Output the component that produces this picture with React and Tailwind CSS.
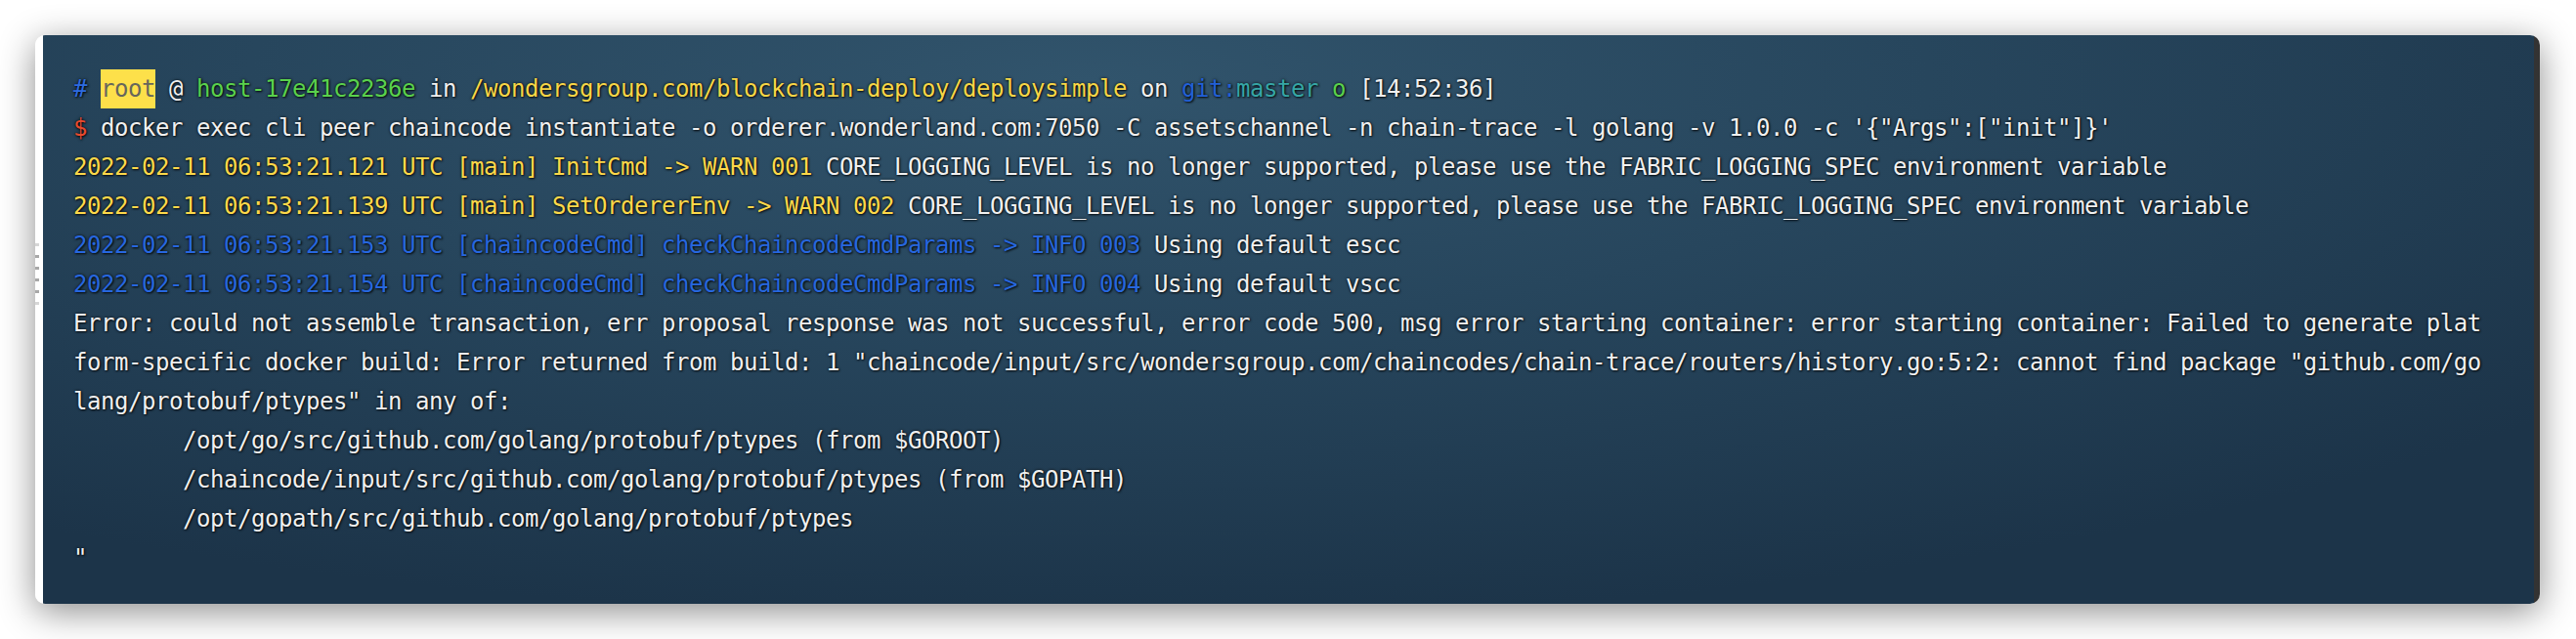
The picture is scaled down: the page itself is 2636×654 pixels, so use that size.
const W = 'text-[#f0f0f0]'
const YEL = 'text-[#fcd84a]'
const BLU = 'text-[#2767de]'

const warnLines = [
  ['2022-02-11 06:53:21.121 UTC [main] InitCmd -> WARN 001', ' CORE_LOGGING_LEVEL is no longer supported, please use the FABRIC_LOGGING_SPEC environment variable'],
  ['2022-02-11 06:53:21.139 UTC [main] SetOrdererEnv -> WARN 002', ' CORE_LOGGING_LEVEL is no longer supported, please use the FABRIC_LOGGING_SPEC environment variable'],
]

const infoLines = [
  ['2022-02-11 06:53:21.153 UTC [chaincodeCmd] checkChaincodeCmdParams -> INFO 003', ' Using default escc'],
  ['2022-02-11 06:53:21.154 UTC [chaincodeCmd] checkChaincodeCmdParams -> INFO 004', ' Using default vscc'],
]

const errorLines = [
  'Error: could not assemble transaction, err proposal response was not successful, error code 500, msg error starting container: error starting container: Failed to generate plat',
  'form-specific docker build: Error returned from build: 1 "chaincode/input/src/wondersgroup.com/chaincodes/chain-trace/routers/history.go:5:2: cannot find package "github.com/go',
  'lang/protobuf/ptypes" in any of:',
  '        /opt/go/src/github.com/golang/protobuf/ptypes (from $GOROOT)',
  '        /chaincode/input/src/github.com/golang/protobuf/ptypes (from $GOPATH)',
  '        /opt/gopath/src/github.com/golang/protobuf/ptypes',
  '"',
]

function Line({ children }) {
  return <div className="h-[40px] leading-[40px] whitespace-pre">{children}</div>
}

export default function App() {
  return (
    <div className="h-[654px] w-[2636px] bg-white pl-[36px] pr-[37px] pt-[36px]">
      <div className="flex h-[582px] overflow-hidden rounded-[10px] shadow-[0_8px_36px_rgba(0,0,0,0.45)]">
        {/* left edge with grip */}
        <div className="flex w-[8px] flex-col gap-[9px] bg-white pt-[213px]">
          <span className="h-[3px] w-[4px] bg-[#d6d6d6]" />
          <span className="h-[3px] w-[4px] bg-[#a8a8a8]" />
          <span className="h-[3px] w-[4px] bg-[#a8a8a8]" />
          <span className="h-[3px] w-[4px] bg-[#a8a8a8]" />
          <span className="h-[3px] w-[4px] bg-[#a8a8a8]" />
          <span className="h-[3px] w-[4px] bg-[#d6d6d6]" />
        </div>

        <div className="flex-1 border-r-[6px] border-[#333333] bg-[radial-gradient(ellipse_75%_95%_at_42%_8%,#31546c_0%,#27465d_45%,#1c3449_100%)] pl-[31px] pt-[35px] font-['DejaVu_Sans_Mono','Liberation_Mono',monospace] text-[24px] tracking-[-0.45px] [text-shadow:0_0_3px_rgba(0,0,0,0.85),1px_1px_2px_rgba(0,0,0,0.7)]">
          <Line>
            <span className="text-[#2d6be0]">#</span>
            <span className={W}> </span>
            <span className="inline-block h-[40px] bg-[#fde04a] text-[#66665c] [text-shadow:none]">root</span>
            <span className={W}> @ </span>
            <span className="text-[#5ad14d]">host-17e41c2236e</span>
            <span className={W}> in </span>
            <span className="text-[#f7d647]">/wondersgroup.com/blockchain-deploy/deploysimple</span>
            <span className={W}> on </span>
            <span className="text-[#2260d6]">git:</span>
            <span className="text-[#36a6a6]">master</span>
            <span className={W}> </span>
            <span className="text-[#5ad14d]">o</span>
            <span className={W}> [14:52:36]</span>
          </Line>
          <Line>
            <span className="text-[#e84a2e]">$</span>
            <span className={W}> docker exec cli peer chaincode instantiate -o orderer.wonderland.com:7050 -C assetschannel -n chain-trace -l golang -v 1.0.0 -c '{'{'}"Args":["init"]{'}'}'</span>
          </Line>
          {warnLines.map(([head, tail]) => (
            <Line key={head}>
              <span className={YEL}>{head}</span>
              <span className={W}>{tail}</span>
            </Line>
          ))}
          {infoLines.map(([head, tail]) => (
            <Line key={head}>
              <span className={BLU}>{head}</span>
              <span className={W}>{tail}</span>
            </Line>
          ))}
          {errorLines.map((l, i) => (
            <Line key={i}>
              <span className={W}>{l}</span>
            </Line>
          ))}
        </div>
      </div>
    </div>
  )
}
